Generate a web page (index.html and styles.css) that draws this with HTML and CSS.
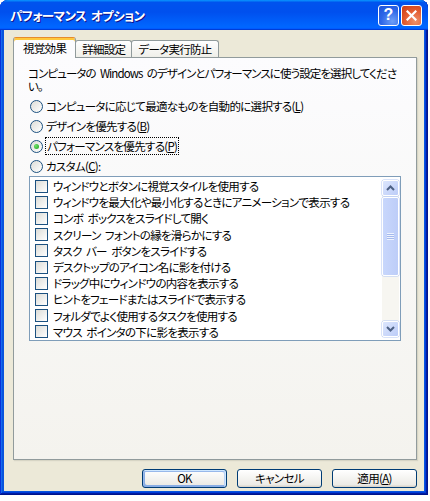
FILE: index.html
```html
<!DOCTYPE html>
<html lang="ja">
<head>
  <meta charset="UTF-8" />
  <title>パフォーマンス オプション</title>
  <link rel="stylesheet" href="styles.css">
</head>
<body>
  <div class="window">
    <!-- Title bar -->
    <div class="titlebar">
      <span class="title">パフォーマンス オプション</span>
      <div class="title-buttons">
        <button class="tb tb-help">?</button>
        <button class="tb tb-close">
          <svg width="11" height="11" viewBox="0 0 11 11"><path d="M1.5 1.5 L9.5 9.5 M9.5 1.5 L1.5 9.5" stroke="#fff" stroke-width="2.2" stroke-linecap="square"/></svg>
        </button>
      </div>
    </div>

    <div class="client">
      <div class="tabs">
        <div class="tab active">視覚効果</div>
        <div class="tab">詳細設定</div>
        <div class="tab">データ実行防止</div>
      </div>

      <div class="panel">
        <div class="desc">
          <span class="line">コンピュータの Windows のデザインとパフォーマンスに使う設定を選択してくださ</span>
          <span class="line">い。</span>
        </div>

        <div class="options">
          <label class="radio"><span class="circle"></span><span>コンピュータに応じて最適なものを自動的に選択する(<u>L</u>)</span></label>
          <label class="radio"><span class="circle"></span><span>デザインを優先する(<u>B</u>)</span></label>
          <label class="radio checked"><span class="circle"></span><span class="focus">パフォーマンスを優先する(<u>P</u>)</span></label>
          <label class="radio"><span class="circle"></span><span>カスタム(<u>C</u>):</span></label>
        </div>

        <div class="listbox">
          <ul class="items">
            <li><span class="check"></span>ウィンドウとボタンに視覚スタイルを使用する</li>
            <li><span class="check"></span>ウィンドウを最大化や最小化するときにアニメーションで表示する</li>
            <li><span class="check"></span>コンボ ボックスをスライドして開く</li>
            <li><span class="check"></span>スクリーン フォントの縁を滑らかにする</li>
            <li><span class="check"></span>タスク バー ボタンをスライドする</li>
            <li><span class="check"></span>デスクトップのアイコン名に影を付ける</li>
            <li><span class="check"></span>ドラッグ中にウィンドウの内容を表示する</li>
            <li><span class="check"></span>ヒントをフェードまたはスライドで表示する</li>
            <li><span class="check"></span>フォルダでよく使用するタスクを使用する</li>
            <li><span class="check"></span>マウス ポインタの下に影を表示する</li>
          </ul>
          <div class="scrollbar">
            <div class="sb-btn">
              <svg width="9" height="6" viewBox="0 0 9 6"><path d="M1 5 L4.5 1.5 L8 5" fill="none" stroke="#4d6185" stroke-width="2"/></svg>
            </div>
            <div class="sb-track">
              <div class="sb-thumb"><span class="grip"></span></div>
            </div>
            <div class="sb-btn">
              <svg width="9" height="6" viewBox="0 0 9 6"><path d="M1 1 L4.5 4.5 L8 1" fill="none" stroke="#4d6185" stroke-width="2"/></svg>
            </div>
          </div>
        </div>
      </div>

      <div class="actions">
        <button class="btn default">OK</button>
        <button class="btn">キャンセル</button>
        <button class="btn">適用(<u>A</u>)</button>
      </div>
    </div>
  </div>
</body>
</html>
```

FILE: styles.css
```css
/* Reset & Base */
*, *::before, *::after { box-sizing: border-box; margin: 0; padding: 0; }
html, body { background: #fff; color: #000; height: 100%; }
body { font-family: 'Noto Sans CJK JP', 'Liberation Sans', sans-serif; font-size: 11.5px; letter-spacing: -0.7px; word-spacing: 2.5px; font-feature-settings: "palt"; }
button { font: inherit; letter-spacing: inherit; cursor: pointer; }
u { text-decoration: underline; text-underline-offset: 1px; }

/* Window frame */
.window {
  width: 428px;
  height: 495px;
  display: flex;
  flex-direction: column;
  border-radius: 8px 8px 0 0;
  overflow: hidden;
  background: #0855dd;
  box-shadow: inset -1px -1px #00138c, inset 1px 1px #0831d9, inset -2px -2px #001ea0, inset 2px 2px #166aee, inset -3px -3px #003bda, inset 3px 3px #0855dd;
}

/* Title bar */
.titlebar {
  height: 30px;
  flex-shrink: 0;
  display: flex;
  align-items: center;
  justify-content: space-between;
  padding: 0 6px 0 10px;
  background: linear-gradient(180deg, #0997ff, #0053ee 8%, #0050ee 40%, #06f 88%, #06f 93%, #005bff 95%, #003dd7 96%, #003dd7);
}
.title { color: #fff; font-weight: 700; font-size: 12.5px; letter-spacing: -0.6px; text-shadow: 1px 1px #0f1089; }
.title-buttons { display: flex; gap: 2px; }
.tb { width: 21px; height: 21px; border: 1px solid #fff; border-radius: 3px; display: flex; align-items: center; justify-content: center; color: #fff; }
.tb-help { background: radial-gradient(circle at 70% 80%, #6e9ff7, #2c66e8 55%, #1c52d6); font-family: 'Liberation Sans', sans-serif; font-weight: 700; font-size: 16px; letter-spacing: 0; line-height: 1; }
.tb-close { background: radial-gradient(circle at 70% 80%, #f0916b, #e25a2e 55%, #c73b15); }

/* Client area */
.client {
  flex: 1;
  display: flex;
  flex-direction: column;
  margin: 0 4px 4px;
  padding: 7px 7px 3px 9px;
  background: #ece9d8;
}

/* Tabs */
.tabs { display: flex; align-items: flex-end; height: 20px; position: relative; z-index: 1; }
.tab {
  height: 17px;
  padding: 0 6px;
  display: flex;
  align-items: center;
  border: 1px solid #919b9c;
  border-bottom: 0;
  border-radius: 3px 3px 0 0;
  background: linear-gradient(180deg, #fff, #fafaf9 26%, #f0f0ea 95%, #ecebe6);
  margin-left: -1px;
}
.tab.active {
  height: 21px;
  margin-bottom: -1px;
  margin-left: 0;
  padding: 0 9px;
  background: #fcfcfe;
  border-top: 1px solid #e68b2c;
  box-shadow: inset 0 2px #ffc83c;
  position: relative;
  z-index: 2;
}

/* Tab panel */
.panel {
  flex: 1;
  border: 1px solid #919b9c;
  background: linear-gradient(180deg, #fcfcfe, #f4f3ee);
  box-shadow: 1px 1px 1px rgba(208, 206, 191, 0.75);
  padding: 9px 15px 0 14px;
}
.desc { display: flex; flex-direction: column; letter-spacing: -0.9px; }
.desc .line { height: 13px; line-height: 13px; white-space: nowrap; }

/* Radio options */
.options { display: flex; flex-direction: column; margin-top: 3px; }
.radio { height: 20px; display: flex; align-items: center; gap: 3px; margin-left: 2px; }
.circle {
  width: 13px;
  height: 13px;
  border-radius: 50%;
  border: 1px solid #1c5180;
  background: linear-gradient(135deg, #dcdcd7, #fff);
  display: flex;
  align-items: center;
  justify-content: center;
}
.radio.checked .circle::after { content: ""; width: 5px; height: 5px; border-radius: 50%; background: radial-gradient(circle at 35% 35%, #6fe36a, #21a121); }
.focus { outline: 1px dotted #000; outline-offset: 0; padding: 0 1px; }

/* List box */
.listbox {
  margin-left: 1px;
  height: 165px;
  border: 1px solid #7f9db9;
  background: #fff;
  display: flex;
}
.items { flex: 1; list-style: none; padding-top: 1px; }
.items li { height: 16.2px; display: flex; align-items: center; gap: 5px; padding-left: 5px; white-space: nowrap; }
.check { width: 13px; height: 13px; flex-shrink: 0; border: 1px solid #1c5180; background: linear-gradient(135deg, #dcdcd7, #fff); }

/* Scrollbar */
.scrollbar { width: 17px; margin: 3px 1px 3px 0; display: flex; flex-direction: column; background: #f7f6f1; }
.sb-btn {
  height: 16px;
  flex-shrink: 0;
  display: flex;
  align-items: center;
  justify-content: center;
  border: 1px solid #fff;
  border-radius: 2px;
  background: linear-gradient(135deg, #dce6fd, #bcccf8);
  box-shadow: 0 0 0 0.5px #b4c7f4;
}
.sb-track { flex: 1; display: flex; flex-direction: column; }
.sb-thumb {
  height: 79px;
  margin-top: 1px;
  border: 1px solid #fff;
  border-radius: 2px;
  background: linear-gradient(90deg, #c8d7fc, #bdcdf8);
  box-shadow: 0 0 0 0.5px #b4c7f4;
  display: flex;
  align-items: center;
  justify-content: center;
}
.grip { width: 7px; height: 7px; background: repeating-linear-gradient(180deg, #eef3fe 0 1px, #a4b9ed 1px 2px); }

/* Dialog buttons */
.actions { display: flex; justify-content: flex-end; gap: 10px; margin-top: 9px; height: 19px; }
.btn {
  width: 85px;
  height: 19px;
  border: 1px solid #003c74;
  border-radius: 3px;
  background: linear-gradient(180deg, #fff, #ecebe6 86%, #d6d0c5);
  color: #000;
  line-height: 1;
}
.btn.default { box-shadow: inset -1px 1px #cee7ff, inset 1px 2px #98b8ea, inset -2px 2px #bcd4f6, inset 1px -1px #89ade4, inset 2px -2px #89ade4; }
```
